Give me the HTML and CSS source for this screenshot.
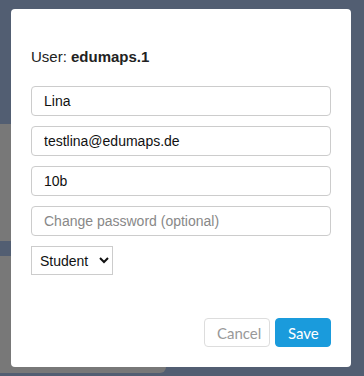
FILE: index.html
```html
<!DOCTYPE html>
<html lang="en">
<head>
  <meta charset="UTF-8">
  <title>Edit user</title>
  <link rel="stylesheet" href="styles.css">
</head>
<body>
  <div class="page">
    <div class="panel"></div>
    <div class="panel panel-last"></div>
  </div>

  <div class="modal">
    <p class="user">User: <b>edumaps.1</b></p>
    <form class="fields">
      <input type="text" value="Lina">
      <input type="text" value="testlina@edumaps.de">
      <input type="text" value="10b">
      <input type="password" placeholder="Change password (optional)">
      <select>
        <option>Student</option>
        <option>Teacher</option>
      </select>
    </form>
    <div class="actions">
      <button type="button" class="btn btn-cancel">Cancel</button>
      <button type="button" class="btn btn-save">Save</button>
    </div>
  </div>
</body>
</html>
```

FILE: styles.css
```css
*{box-sizing:border-box;}
body{margin:0;background:#525e72;font-family:Arial,"Liberation Sans",Helvetica,sans-serif;overflow:hidden;}
.page{padding-top:124px;display:flex;flex-direction:column;gap:15px;}
.panel{width:166px;height:117px;background:#787878;}
.panel-last{border-bottom-right-radius:6px;}

.modal{position:absolute;left:11px;top:9px;width:340px;height:358px;background:#fff;border-radius:4px;padding:39px 20px 20px;display:flex;flex-direction:column;}
.user{margin:0 0 21px;font-size:15px;line-height:17px;color:#222;}
.user b{font-weight:bold;}
.fields{display:flex;flex-direction:column;gap:10px;align-items:flex-start;}
input{width:300px;height:30px;padding:0 12px;font-size:14px;font-family:inherit;color:#111;border:1px solid #ccc;border-radius:4px;outline:none;}
input::placeholder{color:#888;}
select{height:29px;width:82px;padding:0 4px;font-size:14px;font-family:inherit;color:#111;background:#fff;border:1px solid #ccc;border-radius:0;}
.actions{margin-top:auto;display:flex;justify-content:flex-end;gap:5px;}
.btn{height:29px;padding:0 12px;font-family:Lato,"Open Sans",sans-serif;font-size:15px;border-radius:4px;cursor:pointer;}
.btn-cancel{width:66px;background:#fff;color:#999;border:1px solid #ddd;}
.btn-save{width:56px;background:#1a9bdc;color:#fff;border:1px solid #1a9bdc;}
```
